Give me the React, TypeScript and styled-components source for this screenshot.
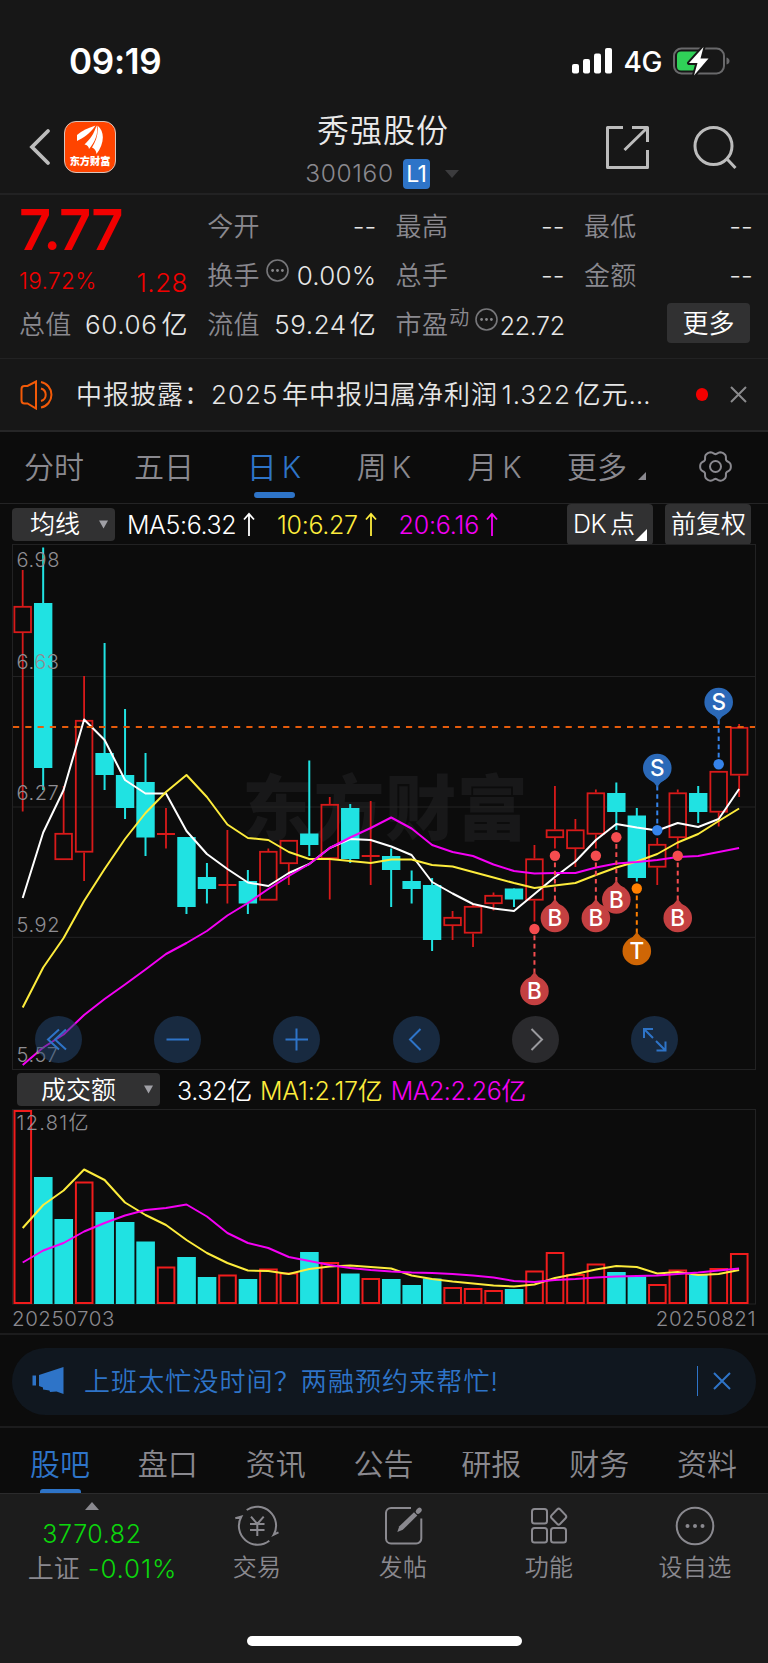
import React from "react";
import styled, { createGlobalStyle } from "styled-components";

const GlobalStyle = createGlobalStyle`
  * { box-sizing: border-box; }
  body {
    margin: 0;
    background: #0c0c0c;
    font-family: Inter, "Noto Sans CJK SC", sans-serif;
    font-weight: 350;
    color: #e6e6e6;
  }
`;

const RED = "#f20000";
const CANDLE_RED = "#d81a1a";
const CYAN = "#20e2e2";
const BLUE = "#2e74c8";
const GREY = "#8a898f";
const YELLOW = "#fdec3c";
const MAGENTA = "#f400f4";
const LINE = "#222223";

/* ---------- layout ---------- */

const Screen = styled.div`
  width: 768px;
  height: 1663px;
  display: flex;
  flex-direction: column;
  overflow: hidden;
  background: #0c0c0c;
  white-space: nowrap;
`;

const Txt = styled.span<{
  $size: number;
  $color?: string;
  $ls?: number;
  $ws?: number;
  $weight?: number;
  $dy?: number;
  $ml?: number;
  $mr?: number;
}>`
  font-size: ${(p) => p.$size}px;
  line-height: 1;
  color: ${(p) => p.$color ?? "inherit"};
  letter-spacing: ${(p) => p.$ls ?? 0}px;
  word-spacing: ${(p) => p.$ws ?? 0}px;
  font-weight: ${(p) => p.$weight ?? "inherit"};
  margin-left: ${(p) => p.$ml ?? 0}px;
  margin-right: ${(p) => p.$mr ?? 0}px;
  padding-top: ${(p) => Math.max(0, (p.$dy ?? 0) * 2)}px;
  padding-bottom: ${(p) => Math.max(0, (p.$dy ?? 0) * -2)}px;
`;

const StatusBar = styled.div`
  height: 101px;
  padding: 21px 38px 0 69px;
  background: #171717;
  display: flex;
  align-items: center;
  justify-content: space-between;
`;

const StatusIcons = styled.div`
  display: flex;
  align-items: center;
`;

const Header = styled.header`
  height: 94px;
  padding: 0 31px 0 28px;
  background: #171717;
  border-bottom: 2px solid ${LINE};
  display: grid;
  grid-template-columns: 260px 1fr 259px;
  align-items: center;
`;

const HeaderSide = styled.div<{ $end?: boolean }>`
  display: flex;
  align-items: center;
  justify-content: ${(p) => (p.$end ? "flex-end" : "flex-start")};
  gap: ${(p) => (p.$end ? 42 : 13)}px;
`;

const Logo = styled.div`
  width: 52px;
  height: 52px;
  border-radius: 12px;
  border: 1.5px solid #d8c4bc;
  background: #ff4400;
  display: flex;
  flex-direction: column;
  align-items: center;
  color: #fff;
`;

const HeaderTitle = styled.div`
  display: flex;
  flex-direction: column;
  align-items: center;
  gap: 12px;
  padding-top: 9px;
`;

const CodeRow = styled.div`
  display: flex;
  align-items: center;
  height: 30px;
  padding-right: 2px;
`;

const LevelBadge = styled.span`
  width: 27px;
  height: 30px;
  margin: 0 15px 0 9px;
  border-radius: 4px;
  background: ${BLUE};
  color: #fff;
  font-size: 23px;
  font-weight: 400;
  letter-spacing: -0.6px;
  line-height: 30px;
  text-align: center;
`;

const Quote = styled.section`
  height: 164px;
  padding: 7px 16px 0 19px;
  background: #171717;
  border-bottom: 1px solid ${LINE};
  display: grid;
  grid-template-columns: 169px 169px 169px 169px;
  column-gap: 19.3px;
`;

const QuoteCol = styled.div`
  display: grid;
  grid-template-rows: 49px 49px 49px;
`;

const Cell = styled.div`
  display: flex;
  align-items: center;
  justify-content: space-between;
  height: 49px;
`;

const LabelGroup = styled.span`
  display: flex;
  align-items: center;
`;

const MoreButton = styled.button`
  width: 83px;
  height: 40px;
  margin-left: auto;
  margin-right: 3px;
  margin-bottom: 3px;
  padding: 0;
  border: 0;
  border-radius: 4px;
  background: #313132;
  color: #fff;
  font: inherit;
  font-size: 26px;
  line-height: 39px;
`;

const News = styled.section`
  height: 73px;
  padding: 0 21px 0 20px;
  background: #171717;
  border-bottom: 2px solid #262627;
  display: flex;
  align-items: center;
`;

const NewsText = styled.div`
  flex: 1;
  padding-left: 20px;
`;

const RedDot = styled.i`
  width: 12.5px;
  height: 12.5px;
  border-radius: 50%;
  background: ${RED};
  margin-right: 22px;
`;

const PeriodTabs = styled.nav`
  height: 72px;
  margin-left: -1px;
  border-bottom: 1.5px solid #242425;
  display: grid;
  grid-template-columns: repeat(4, 110px) 111px 113px 105px;
`;

const Tab = styled.div<{ $active?: boolean; $bar?: number; $lift?: number }>`
  display: flex;
  align-items: center;
  justify-content: center;
  position: relative;
  font-size: 30px;
  word-spacing: -3.5px;
  color: ${(p) => (p.$active ? BLUE : GREY)};
  padding-bottom: ${(p) => p.$lift ?? 0}px;
  &::after {
    content: "";
    display: ${(p) => (p.$active ? "block" : "none")};
    position: absolute;
    left: 50%;
    bottom: ${(p) => p.$bar ?? -2}px;
    width: 41px;
    height: 6px;
    margin-left: -20px;
    border-radius: 3px;
    background: ${BLUE};
  }
`;

const Legend = styled.div<{ $h: number; $left: number }>`
  height: ${(p) => p.$h}px;
  padding: 0 17px 0 ${(p) => p.$left}px;
  display: flex;
  align-items: center;
`;

const Select = styled.div<{ $w: number; $pad: number }>`
  width: ${(p) => p.$w}px;
  height: 33px;
  padding: 0 7px 0 ${(p) => p.$pad}px;
  border-radius: 4px;
  background: #313132;
  color: #fff;
  display: flex;
  align-items: center;
  justify-content: space-between;
`;

const Chip = styled.div<{ $gap?: boolean }>`
  position: relative;
  width: 86px;
  height: 41px;
  padding-left: 6px;
  margin-left: ${(p) => (p.$gap ? 12 : 0)}px;
  border-radius: 4px;
  background: #313132;
  color: #fff;
  display: flex;
  align-items: center;
`;

const ChipCorner = styled.svg`
  position: absolute;
  right: 6px;
  bottom: 4px;
`;

const Spacer = styled.div`
  flex: 1;
`;

const ChartArea = styled.div`
  position: relative;
  height: 526px;
  padding-left: 12px;
`;

const ChartControls = styled.div`
  position: absolute;
  left: 35px;
  top: 472px;
  width: 643px;
  display: flex;
  justify-content: space-between;
`;

const RoundButton = styled.button<{ $muted?: boolean }>`
  width: 47px;
  height: 47px;
  padding: 0;
  border: 0;
  border-radius: 50%;
  background: ${(p) => (p.$muted ? "rgba(72, 72, 78, 0.5)" : "rgba(36, 72, 116, 0.5)")};
  display: block;
`;

const VolumeArea = styled.div`
  height: 196px;
  padding-left: 12px;
`;

const Dates = styled.div`
  height: 30px;
  padding: 0 12px 0 12px;
  border-bottom: 2px solid #1c1c1d;
  display: flex;
  align-items: center;
  justify-content: space-between;
`;

const BannerWrap = styled.div`
  height: 93px;
  padding: 12.5px 12px 0;
  border-bottom: 2px solid #1c1c1d;
`;

const Banner = styled.div`
  height: 67px;
  padding: 0 25px 0 20px;
  border-radius: 34px;
  background: #10171f;
  display: flex;
  align-items: center;
`;

const BannerRule = styled.i`
  width: 1.5px;
  height: 30px;
  margin-right: 15px;
  background: ${BLUE};
`;

const InfoTabs = styled.nav`
  height: 65px;
  padding: 5px 31px 0 30px;
  display: flex;
  justify-content: space-between;
  overflow: hidden;
`;

const BottomBar = styled.footer`
  flex: 1;
  background: #1c1c1c;
  border-top: 1px solid #2b2b2c;
  display: flex;
  flex-direction: column;
  align-items: center;
  justify-content: space-between;
  padding-bottom: 17px;
`;

const BottomRow = styled.div`
  width: 768px;
  display: grid;
  grid-template-columns: 184px repeat(4, 146px);
`;

const IndexBox = styled.div`
  display: flex;
  flex-direction: column;
  align-items: center;
  padding-top: 8px;
`;

const IndexValue = styled.div`
  margin-top: 12px;
  font-size: 25px;
  line-height: 25px;
  letter-spacing: 0.6px;
  color: #0cd60c;
`;

const IndexLine = styled.div`
  display: flex;
  align-items: center;
  gap: 8px;
  margin-top: 8px;
  padding-left: 21px;
`;

const Action = styled.div`
  display: flex;
  flex-direction: column;
  align-items: center;
  padding-top: 11px;
  gap: 9px;
  color: ${GREY};
`;

const HomeIndicator = styled.div`
  width: 275px;
  height: 10px;
  border-radius: 5px;
  background: #fff;
`;

const ArrowIcon = styled.svg<{ $mr: number }>`
  margin-left: 7px;
  margin-right: ${(p) => p.$mr}px;
`;

const DotsIcon = styled.svg<{ $ml: number }>`
  margin-left: ${(p) => p.$ml}px;
`;

const LogoMark = styled.svg`
  margin: 3px 0 1px;
`;

/* ---------- icons ---------- */

const Dots = ({ ml, lift }: { ml: number; lift: number }) => (
  <DotsIcon $ml={ml} width="23" height={23 + lift} fill="none" stroke="#77777a" strokeWidth="1.6">
    <circle cx="11.5" cy="11.5" r="10.5" />
    <g fill="#88888b" stroke="none">
      <circle cx="6.6" cy="11.5" r="1.4" />
      <circle cx="11.5" cy="11.5" r="1.4" />
      <circle cx="16.4" cy="11.5" r="1.4" />
    </g>
  </DotsIcon>
);

const gearPath = (() => {
  const pts: string[] = [];
  for (let i = 0; i < 72; i++) {
    const a = (i * Math.PI) / 36;
    const c = Math.cos(6 * a);
    const r = 14.2 + 1.5 * c - 0.35 * Math.cos(12 * a);
    pts.push(`${(17.5 + r * Math.cos(a)).toFixed(2)} ${(17.5 + r * Math.sin(a)).toFixed(2)}`);
  }
  return `M${pts.join("L")}Z`;
})();

const Cross = ({ size, color, width }: { size: number; color: string; width: number }) => (
  <svg width={size} height={size} stroke={color} strokeWidth={width}>
    <path d={`M1 1L${size - 1} ${size - 1}M${size - 1} 1L1 ${size - 1}`} />
  </svg>
);

const UpArrow = ({ color, mr }: { color: string; mr: number }) => (
  <ArrowIcon $mr={mr} width="12" height="24" fill="none" stroke={color} strokeWidth="1.8">
    <path d="M6 24V2M1 7.5L6 1.8L11 7.5" />
  </ArrowIcon>
);

const Caret = () => (
  <svg width="9" height="9">
    <path d="M0 0.5H9L4.5 8.5Z" fill="#a0a0a6" />
  </svg>
);

/* ---------- chart data: [up, high, bodyTop, bodyBottom, low] ---------- */

type Candle = [number, number, number, number, number];

const candles: Candle[] = [
  [1, 570, 606, 633, 811.5], [0, 547.5, 603, 768, 790], [1, 786, 833, 860, 860], [1, 676, 720, 852.5, 881],
  [0, 643, 753, 775, 790], [0, 709, 775, 808, 819], [0, 753, 782, 837.5, 856], [1, 808, 833, 835, 848.5],
  [0, 837, 837, 907, 914], [0, 863, 877, 889, 903.5], [1, 830, 884, 886, 903.5], [0, 870, 881, 903.5, 914],
  [1, 848.5, 851, 900.5, 900.5], [1, 840, 840, 864, 885], [0, 760.5, 833.5, 845, 856], [1, 797, 804, 859, 899.5],
  [0, 804, 808, 859, 863], [1, 801, 855, 857, 885], [0, 848.5, 856, 870, 907], [0, 870.5, 881, 889, 903.5],
  [0, 878, 885, 940, 951], [1, 911, 917, 926, 940], [1, 904, 906, 933.5, 947], [1, 892.5, 895, 904, 910.5],
  [0, 888.5, 888.5, 899.5, 907], [1, 845, 858.5, 900.5, 921.5], [1, 786, 829.5, 838, 848.5], [1, 819, 829.5, 849, 867],
  [1, 789.5, 792.5, 834.5, 848.5], [0, 782.5, 793, 812, 830], [0, 808, 815.5, 878, 881.5], [1, 838, 844, 867.5, 885],
  [1, 789.5, 792.5, 838, 848.5], [0, 786, 793, 812, 823], [1, 771, 771, 812.5, 826.5], [1, 724, 727, 775.5, 797],
];

const ma5 = [898, 832.5, 790, 719.5, 740, 780, 793.5, 793.5, 831, 854, 869, 882.5, 886, 873, 864, 848, 839, 840, 846.5, 855, 882, 893.5, 904, 908.5, 911, 894, 877, 861.5, 840, 824, 827.5, 830.5, 823, 827, 819, 789];
const ma10 = [1007.5, 967.5, 938, 901, 869, 839, 813, 792, 775, 797, 824.5, 838, 840, 852, 859, 859, 861, 863, 859.5, 859.5, 865, 866.5, 872, 877.5, 883, 888, 885.5, 883, 875, 867.5, 861.5, 854, 842.5, 834, 821, 808.5];
const ma20 = [1065, 1047.5, 1034.5, 1015, 999, 984.5, 969.5, 954, 943, 931, 915.5, 903, 889, 876, 864, 848, 837.5, 828, 817.5, 828.5, 845, 852, 856, 864.5, 871, 873.5, 873, 873, 867.5, 863.5, 862, 860, 857, 856, 852, 848];

const volumes = [1110, 1177, 1219, 1181.5, 1212, 1222, 1241.5, 1266.5, 1257, 1277, 1274.5, 1279, 1268.5, 1272.5, 1252, 1262, 1273.5, 1278, 1279, 1285, 1278.5, 1287, 1288, 1290, 1289, 1270.5, 1252, 1274, 1263.5, 1272, 1276.5, 1284, 1269.5, 1275, 1268, 1253];
const vma1 = [1228, 1205, 1190.5, 1169.5, 1180, 1202.5, 1215, 1225, 1240, 1253, 1263, 1270.5, 1271, 1274, 1269, 1266.5, 1265.5, 1267, 1268.5, 1275.5, 1279, 1281.5, 1283.5, 1285.5, 1286.5, 1284.5, 1278, 1274, 1269.5, 1266, 1267, 1273.5, 1272, 1275, 1274, 1270];
const vma2 = [1262.5, 1250.5, 1243, 1231.5, 1223, 1215.5, 1210, 1208, 1204.5, 1216.5, 1233, 1243, 1248, 1257, 1261, 1265, 1268, 1270, 1271.5, 1272.5, 1273, 1274, 1275.5, 1277.5, 1281, 1282, 1280, 1279, 1277.5, 1276.5, 1276, 1275.5, 1274, 1272.5, 1270.5, 1268.5];

const cx = (i: number) => 22.7 + i * 20.47;
const toPoints = (ys: number[]) => ys.map((y, i) => `${cx(i).toFixed(1)},${y}`).join(" ");

const Series = ({ ys, color }: { ys: number[]; color: string }) => (
  <polyline points={toPoints(ys)} fill="none" stroke={color} strokeWidth="2" strokeLinejoin="round" />
);

const markers: { i: number; kind: "B" | "S" | "T"; dot: number; pin: number }[] = [
  { i: 25, kind: "B", dot: 929, pin: 991 },
  { i: 26, kind: "B", dot: 855.7, pin: 918 },
  { i: 28, kind: "B", dot: 855.7, pin: 918 },
  { i: 29, kind: "B", dot: 837.3, pin: 899.5 },
  { i: 30, kind: "T", dot: 888.5, pin: 951 },
  { i: 32, kind: "B", dot: 855.7, pin: 918 },
  { i: 31, kind: "S", dot: 830.3, pin: 768 },
  { i: 34, kind: "S", dot: 764.3, pin: 702 },
];

const markerColors = {
  B: { pin: "#c44041", dot: "#f44c4f" },
  S: { pin: "#2b69b8", dot: "#3583ea" },
  T: { pin: "#cf6605", dot: "#ff8000" },
};

const Marker = ({ i, kind, dot, pin }: (typeof markers)[number]) => {
  const x = cx(i);
  const { pin: fill, dot: dotFill } = markerColors[kind];
  const dir = pin > dot ? -1 : 1;
  return (
    <g>
      <line x1={x} x2={x} y1={pin + dir * 18} y2={dot} stroke={dotFill} strokeWidth="2" strokeDasharray="4.6 3.6" />
      <circle cx={x} cy={dot} r="5.2" fill={dotFill} />
      <path
        d={`M${x - 9} ${pin + dir * 10.5}Q${x - 3} ${pin + dir * 14} ${x} ${pin + dir * 19.5}Q${x + 3} ${pin + dir * 14} ${x + 9} ${pin + dir * 10.5}Z`}
        fill={fill}
      />
      <circle cx={x} cy={pin} r="14.3" fill={fill} />
      <text x={x} y={pin + 8} fontSize="22.5" fontWeight="500" fill="#fff" textAnchor="middle">
        {kind}
      </text>
    </g>
  );
};

const PriceChart = () => (
  <svg width="744" height="526" viewBox="12 544 744 526" display="block">
    <text x="242" y="834" fontSize="71" fontWeight="900" fill="#181819" letterSpacing="0.6">
      东方财富
    </text>
    <g stroke={LINE} strokeWidth="1" fill="none">
      <rect x="12.5" y="544.5" width="743" height="525" />
      <path d="M12 676.5H755M12 807H755M12 937.3H755" />
    </g>
    {candles.map(([up, high, top, bottom, low], i) => {
      const x = cx(i);
      if (!up) {
        return (
          <g key={i} fill={CYAN}>
            <rect x={x - 1} y={high} width="2" height={low - high} />
            <rect x={x - 9.2} y={top} width="18.4" height={bottom - top} />
          </g>
        );
      }
      const flat = bottom - top <= 2;
      return (
        <g key={i} fill="none" stroke={CANDLE_RED} strokeWidth="1.8">
          {flat ? (
            <path d={`M${x - 9} ${top + 1}H${x + 9}M${x} ${high}V${low}`} />
          ) : (
            <>
              <path d={`M${x} ${high}V${top}M${x} ${bottom}V${low}`} />
              <rect x={x - 8.3} y={top + 0.8} width="16.6" height={bottom - top - 1.6} />
            </>
          )}
        </g>
      );
    })}
    <Series ys={ma5} color="#fff" />
    <Series ys={ma10} color={YELLOW} />
    <Series ys={ma20} color={MAGENTA} />
    <path d="M13 727H755" stroke="#e65c0c" strokeWidth="2" strokeDasharray="6.2 6.08" />
    {markers.map((m) => (
      <Marker key={m.i} {...m} />
    ))}
    <g fontSize="20" fill="#8e8d92" letterSpacing="0.6">
      {([["6.98", 567], ["6.63", 669.3], ["6.27", 800.3], ["5.92", 931.5], ["5.57", 1062.3]] as const).map(([t, y]) => (
        <text key={t} x="16.5" y={y}>
          {t}
        </text>
      ))}
    </g>
  </svg>
);

const VolumeChart = () => (
  <svg width="744" height="196" viewBox="12 1109 744 196" display="block">
    <rect x="12.5" y="1109.5" width="743" height="194.5" fill="none" stroke={LINE} />
    {volumes.map((top, i) => {
      const x = cx(i);
      const outlined = candles[i][0] === 1 && i !== 2;
      return outlined ? (
        <rect key={i} x={x - 8.2} y={top + 1} width="16.6" height={1303 - top - 1} fill="none" stroke="#f01c1c" strokeWidth="2" />
      ) : (
        <rect key={i} x={x - 9.2} y={top} width="18.6" height={1304 - top} fill={CYAN} />
      );
    })}
    <Series ys={vma1} color={YELLOW} />
    <Series ys={vma2} color={MAGENTA} />
    <text x="16.5" y="1130" fontSize="20" fill="#8e8d92" letterSpacing="1.3">
      12.81亿
    </text>
  </svg>
);

const controls: { d: string; muted?: boolean }[] = [
  { d: "M24 13.5L13 23.5L24 33.5M31 13.5L20 23.5L31 33.5" },
  { d: "M12.5 23.5H35" },
  { d: "M12.5 23.5H35M23.5 12.5V34.5" },
  { d: "M27.5 13L17 23.5L27.5 34" },
  { d: "M19.5 13L30 23.5L19.5 34", muted: true },
  { d: "M13 22V13H22M13.5 13.5L22 22M25 25L34 34M34.5 25.5V34.5H25.5" },
];

const periods = ["分时", "五日", "日 K", "周 K", "月 K"];
const infoTabs = ["股吧", "盘口", "资讯", "公告", "研报", "财务", "资料"];

const actions = [
  {
    label: "交易",
    icon: (
      <>
        <path d="M11.7 5A18.8 18.8 0 0 1 38.7 29.7L43.5 27.3" />
        <path d="M34.3 35.7A18.8 18.8 0 0 1 6.3 11.7L0.3 13.3" />
        <path d="M16 11.7L22.3 19L28.7 11.7M22.3 19V31M15 19H29.5M15 25H29.5" />
      </>
    ),
  },
  {
    label: "发帖",
    icon: (
      <>
        <path d="M30 3H10A5 5 0 0 0 5 8V33.5A5 5 0 0 0 10 38.5H35.3A5 5 0 0 0 40.3 33.5V13.5" />
        <path d="M16.3 27L18.3 21.3L33 7.3L36.3 10.6L21.8 24.8Z" fill={GREY} stroke="none" />
        <path d="M37 6.5L38.5 5" strokeWidth="4.6" strokeLinecap="round" />
      </>
    ),
  },
  {
    label: "功能",
    icon: (
      <>
        <rect x="5" y="4" width="15" height="14.5" rx="2.5" />
        <rect x="5" y="23" width="15" height="14.5" rx="2.5" />
        <rect x="24" y="23" width="15" height="14.5" rx="2.5" />
        <path d="M30.3 4.3Q31.7 3 33 4.3L38.8 10.3Q39.8 11.7 38.8 13L33 19Q31.7 20.2 30.3 19L24.5 13Q23.4 11.7 24.5 10.3Z" />
      </>
    ),
  },
  {
    label: "设自选",
    icon: (
      <>
        <circle cx="22" cy="21" r="18.3" />
        <g fill={GREY} stroke="none">
          <circle cx="14.5" cy="21" r="2" />
          <circle cx="22" cy="21" r="2" />
          <circle cx="29.5" cy="21" r="2" />
        </g>
      </>
    ),
  },
];

const Label = ({ children }: { children: React.ReactNode }) => (
  <Txt $size={26} $ls={0.3} $color={GREY}>
    {children}
  </Txt>
);

export default function App() {
  return (
    <Screen>
      <GlobalStyle />
      <StatusBar>
        <Txt $size={35} $weight={600} $color="#fff" $ls={-0.3}>
          09:19
        </Txt>
        <StatusIcons>
          <svg width="41" height="26" fill="#fff">
            <rect x="0" y="16" width="7" height="9.5" rx="2" />
            <rect x="11" y="11" width="7" height="14.5" rx="2" />
            <rect x="22" y="5.5" width="7" height="20" rx="2" />
            <rect x="33" y="0" width="7" height="25.5" rx="2" />
          </svg>
          <Txt $size={28} $weight={450} $color="#fff" $ls={-0.4} $ml={10} $mr={11} $dy={1}>
            4G
          </Txt>
          <svg width="57" height="30" viewBox="0 0 57 30">
            <rect x="1" y="2.5" width="50" height="25" rx="7.5" fill="none" stroke="#69696b" strokeWidth="2" />
            <path d="M53.5 11.5Q56.5 12.5 56.5 15Q56.5 17.5 53.5 18.5Z" fill="#69696b" />
            <path d="M8 5.5H25V24.5H8Q4 24.5 4 20.5V9.5Q4 5.5 8 5.5Z" fill="#30d158" />
            <path d="M30.5 1L16 17H24.5L21 29.5L35.5 12.5H27.5Z" fill="#fff" stroke="#171717" strokeWidth="4" paintOrder="stroke" strokeLinejoin="round" />
          </svg>
        </StatusIcons>
      </StatusBar>

      <Header>
        <HeaderSide>
          <svg width="23" height="38" fill="none" stroke="#bcbcbc" strokeWidth="3.8">
            <path d="M20 3L4 19L20 35" strokeLinecap="round" />
          </svg>
          <Logo>
            <LogoMark width="28" height="30" viewBox="0 0 28 30" fill="#fff">
              <path d="M1 10V16C7 13 14 9 19.5 0.5C12 3 6 5.5 1 10Z" />
              <path d="M8.5 19.5C14 14.5 18 9 20.5 0.5C23 8 18.5 18 13 24Q12.5 20 8.5 19.5Z" />
              <path d="M16 22.5C20 16 22.5 9 21.5 0.5C29.5 7 28 19 20.5 29Q20 24 16 22.5Z" />
            </LogoMark>
            <Txt $size={10.2} $weight={900}>
              东方财富
            </Txt>
          </Logo>
        </HeaderSide>
        <HeaderTitle>
          <Txt $size={32} $ls={1} $color="#eaeaea">
            秀强股份
          </Txt>
          <CodeRow>
            <Txt $size={24.5} $color={GREY} $ls={0.65}>
              300160
            </Txt>
            <LevelBadge>L1</LevelBadge>
            <svg width="14" height="8">
              <path d="M0 0H14L7 8Z" fill="#3c3c3e" />
            </svg>
          </CodeRow>
        </HeaderTitle>
        <HeaderSide $end>
          <svg width="46" height="46" fill="none" stroke="#bcbcbc" strokeWidth="3">
            <path d="M19 3.5H3.5V43.5H43.5V26M28 3.5H43.5V18M42.5 4.5L20.5 26" strokeLinejoin="round" />
          </svg>
          <svg width="45" height="45" fill="none" stroke="#bcbcbc" strokeWidth="3">
            <circle cx="21.5" cy="21" r="18.5" />
            <path d="M35 34L43.5 43" />
          </svg>
        </HeaderSide>
      </Header>

      <Quote>
        <QuoteCol>
          <Cell>
            <Txt $size={56} $weight={600} $color={RED} $ls={-1} $dy={3}>
              7.77
            </Txt>
          </Cell>
          <Cell>
            <Txt $size={22.5} $color={RED} $dy={5.5} $ls={0.4}>
              19.72%
            </Txt>
            <Txt $size={26} $color={RED} $dy={7} $ls={0.5}>
              1.28
            </Txt>
          </Cell>
          <Cell>
            <Label>总值</Label>
            <Txt $size={26} $ls={0.6} $ws={-4}>60.06 亿</Txt>
          </Cell>
        </QuoteCol>
        <QuoteCol>
          <Cell>
            <Label>今开</Label>
            <Txt $size={26}>--</Txt>
          </Cell>
          <Cell>
            <LabelGroup>
              <Label>换手</Label>
              <Dots ml={6} lift={10} />
            </LabelGroup>
            <Txt $size={26} $ls={0.2}>0.00%</Txt>
          </Cell>
          <Cell>
            <Label>流值</Label>
            <Txt $size={26} $ls={0.6} $ws={-5}>59.24 亿</Txt>
          </Cell>
        </QuoteCol>
        <QuoteCol>
          <Cell>
            <Label>最高</Label>
            <Txt $size={26}>--</Txt>
          </Cell>
          <Cell>
            <Label>总手</Label>
            <Txt $size={26}>--</Txt>
          </Cell>
          <Cell>
            <LabelGroup>
              <Label>市盈</Label>
              <Txt $size={20} $color={GREY} $dy={-7} $ml={1}>动</Txt>
              <Dots ml={6} lift={10} />
            </LabelGroup>
            <Txt $size={25} $dy={1.5} $ls={-0.4}>22.72</Txt>
          </Cell>
        </QuoteCol>
        <QuoteCol>
          <Cell>
            <Label>最低</Label>
            <Txt $size={26}>--</Txt>
          </Cell>
          <Cell>
            <Label>金额</Label>
            <Txt $size={26}>--</Txt>
          </Cell>
          <Cell>
            <MoreButton>更多</MoreButton>
          </Cell>
        </QuoteCol>
      </Quote>

      <News>
        <svg width="36" height="30" fill="none" stroke="#f25a08" strokeWidth="2">
          <path d="M1.5 9Q1.5 6 4.5 6H7.5L16 1.5V28.5L7.5 23.5H4.5Q1.5 23.5 1.5 20.5Z" />
          <path d="M21 2A13 13 0 0 1 21 27.5M21 8.5A6.5 6.5 0 0 1 21 21" />
        </svg>
        <NewsText>
          <Txt $size={26} $ls={1} $ws={-4.8}>中报披露：2025 年中报归属净利润 1.322 亿元…</Txt>
        </NewsText>
        <RedDot />
        <Cross size={17} color="#8a8a8c" width={2} />
      </News>

      <PeriodTabs>
        {periods.map((p, i) => (
          <Tab key={p} $active={i === 2} $bar={5} $lift={5}>
            {p}
          </Tab>
        ))}
        <Tab $lift={5}>
          更多
          <svg width="19" height="30" viewBox="0 0 19 30">
            <path d="M19 22V31H10Z" fill={GREY} />
          </svg>
        </Tab>
        <Tab $lift={2}>
          <svg width="35" height="35" fill="none" stroke={GREY} strokeWidth="2">
            <path d={gearPath} />
            <circle cx="17.5" cy="17.5" r="5.5" />
          </svg>
        </Tab>
      </PeriodTabs>

      <Legend $h={40} $left={12}>
        <Select $w={103} $pad={18}>
          <Txt $size={25} $dy={0.5}>均线</Txt>
          <Caret />
        </Select>
        <Txt $size={25} $color="#fff" $ls={-0.4} $dy={1} $ml={12}>
          MA5:6.32
        </Txt>
        <UpArrow color="#fff" mr={22} />
        <Txt $size={25} $color={YELLOW} $ls={-0.35} $dy={1}>10:6.27</Txt>
        <UpArrow color={YELLOW} mr={22} />
        <Txt $size={25} $color={MAGENTA} $ls={-0.2} $dy={1}>20:6.16</Txt>
        <UpArrow color={MAGENTA} mr={0} />
        <Spacer />
        <Chip>
          <Txt $size={25} $ls={-0.4} $ws={-3}>DK 点</Txt>
          <ChipCorner width="12" height="12">
            <path d="M12 0V12H0Z" fill="#fff" />
          </ChipCorner>
        </Chip>
        <Chip $gap>
          <Txt $size={25}>前复权</Txt>
        </Chip>
      </Legend>

      <ChartArea>
        <PriceChart />
        <ChartControls>
          {controls.map((c) => (
            <RoundButton key={c.d} $muted={c.muted}>
              <svg width="47" height="47" fill="none" stroke={c.muted ? "#9a9a9e" : BLUE} strokeWidth="2">
                <path d={c.d} />
              </svg>
            </RoundButton>
          ))}
        </ChartControls>
      </ChartArea>

      <Legend $h={39} $left={17}>
        <Select $w={143} $pad={24}>
          <Txt $size={25} $dy={0.5}>成交额</Txt>
          <Caret />
        </Select>
        <Txt $size={25} $color="#fff" $ls={-0.3} $dy={1.5} $ml={17}>
          3.32亿
        </Txt>
        <Txt $size={25} $color={YELLOW} $ls={-0.2} $dy={1.5} $ml={8}>
          MA1:2.17亿
        </Txt>
        <Txt $size={25} $color={MAGENTA} $ls={-0.5} $dy={1.5} $ml={8}>
          MA2:2.26亿
        </Txt>
      </Legend>

      <VolumeArea>
        <VolumeChart />
      </VolumeArea>
      <Dates>
        <Txt $size={20.5} $color={GREY} $ls={0.55}>20250703</Txt>
        <Txt $size={20.5} $color={GREY} $ls={0.55}>20250821</Txt>
      </Dates>

      <BannerWrap>
        <Banner>
          <svg width="32" height="28" fill={BLUE}>
            <path d="M0.5 8.5H4V18.5H0.5ZM7 8L31.5 0V27L24.5 24.5L18 25L17.5 23.5L11 22.5V20.5L7 19Z" />
          </svg>
          <Txt $size={26} $ls={1.1} $color={BLUE} $ml={20} $dy={1}>
            上班太忙没时间？两融预约来帮忙!
          </Txt>
          <Spacer />
          <BannerRule />
          <Cross size={18} color={BLUE} width={2} />
        </Banner>
      </BannerWrap>

      <InfoTabs>
        {infoTabs.map((t, i) => (
          <Tab key={t} $active={i === 0} $lift={3}>
            {t}
          </Tab>
        ))}
      </InfoTabs>

      <BottomBar>
        <BottomRow>
          <IndexBox>
            <svg width="14" height="8">
              <path d="M7 0L14 8H0Z" fill={GREY} />
            </svg>
            <IndexValue>3770.82</IndexValue>
            <IndexLine>
              <Txt $size={26} $color={GREY}>上证</Txt>
              <Txt $size={26} $color="#0cd60c" $dy={0.5} $ls={0.8}>-0.01%</Txt>
            </IndexLine>
          </IndexBox>
          {actions.map((a) => (
            <Action key={a.label}>
              <svg width="44" height="42" fill="none" stroke={GREY} strokeWidth="2">
                {a.icon}
              </svg>
              <Txt $size={24} $ls={0.3}>{a.label}</Txt>
            </Action>
          ))}
        </BottomRow>
        <HomeIndicator />
      </BottomBar>
    </Screen>
  );
}
